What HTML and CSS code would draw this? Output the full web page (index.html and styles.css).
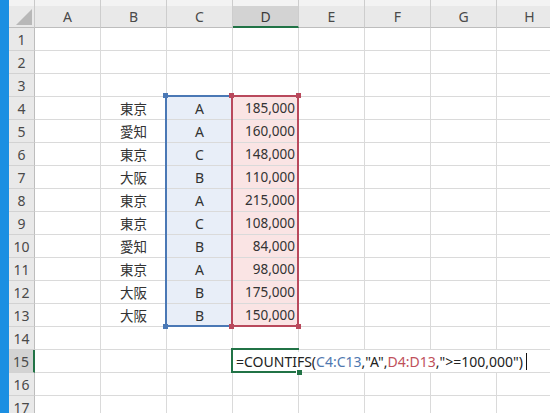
FILE: index.html
```html
<!DOCTYPE html>
<html lang="ja">
<head>
<meta charset="utf-8">
<link rel="stylesheet" href="styles.css">
</head>
<body>
<div class="sheet">
  <div class="strip"></div>
  <div class="grid">
    <div class="corner"><svg width="16" height="16" viewBox="0 0 16 16"><polygon points="16,0 16,16 0,16" fill="#b8b8b8"/></svg></div>
    <div class="ch">A</div><div class="ch">B</div><div class="ch">C</div><div class="ch sel">D</div><div class="ch">E</div><div class="ch">F</div><div class="ch">G</div><div class="ch">H</div>

    <div class="rh">1</div><div class="c"></div><div class="c"></div><div class="c"></div><div class="c"></div><div class="c"></div><div class="c"></div><div class="c"></div><div class="c"></div>
    <div class="rh">2</div><div class="c"></div><div class="c"></div><div class="c"></div><div class="c"></div><div class="c"></div><div class="c"></div><div class="c"></div><div class="c"></div>
    <div class="rh">3</div><div class="c"></div><div class="c"></div><div class="c"></div><div class="c"></div><div class="c"></div><div class="c"></div><div class="c"></div><div class="c"></div>

    <div class="rh">4</div><div class="c"></div><div class="c ctr">東京</div><div class="c ctr blue">A</div><div class="c num red">185,000</div><div class="c"></div><div class="c"></div><div class="c"></div><div class="c"></div>
    <div class="rh">5</div><div class="c"></div><div class="c ctr">愛知</div><div class="c ctr blue">A</div><div class="c num red">160,000</div><div class="c"></div><div class="c"></div><div class="c"></div><div class="c"></div>
    <div class="rh">6</div><div class="c"></div><div class="c ctr">東京</div><div class="c ctr blue">C</div><div class="c num red">148,000</div><div class="c"></div><div class="c"></div><div class="c"></div><div class="c"></div>
    <div class="rh">7</div><div class="c"></div><div class="c ctr">大阪</div><div class="c ctr blue">B</div><div class="c num red">110,000</div><div class="c"></div><div class="c"></div><div class="c"></div><div class="c"></div>
    <div class="rh">8</div><div class="c"></div><div class="c ctr">東京</div><div class="c ctr blue">A</div><div class="c num red">215,000</div><div class="c"></div><div class="c"></div><div class="c"></div><div class="c"></div>
    <div class="rh">9</div><div class="c"></div><div class="c ctr">東京</div><div class="c ctr blue">C</div><div class="c num red">108,000</div><div class="c"></div><div class="c"></div><div class="c"></div><div class="c"></div>
    <div class="rh">10</div><div class="c"></div><div class="c ctr">愛知</div><div class="c ctr blue">B</div><div class="c num red">84,000</div><div class="c"></div><div class="c"></div><div class="c"></div><div class="c"></div>
    <div class="rh">11</div><div class="c"></div><div class="c ctr">東京</div><div class="c ctr blue">A</div><div class="c num red">98,000</div><div class="c"></div><div class="c"></div><div class="c"></div><div class="c"></div>
    <div class="rh">12</div><div class="c"></div><div class="c ctr">大阪</div><div class="c ctr blue">B</div><div class="c num red">175,000</div><div class="c"></div><div class="c"></div><div class="c"></div><div class="c"></div>
    <div class="rh">13</div><div class="c"></div><div class="c ctr">大阪</div><div class="c ctr blue">B</div><div class="c num red">150,000</div><div class="c"></div><div class="c"></div><div class="c"></div><div class="c"></div>
    <div class="rh">14</div><div class="c"></div><div class="c"></div><div class="c"></div><div class="c"></div><div class="c"></div><div class="c"></div><div class="c"></div><div class="c"></div>
    <div class="rh sel">15</div><div class="c"></div><div class="c"></div><div class="c"></div><div class="c edit"><span class="ftext">=COUNTIFS(<span class="rb">C4:C13</span>,"A",<span class="rr">D4:D13</span>,"&gt;=100,000")<span class="caret"></span></span></div><div class="c nob"></div><div class="c nob"></div><div class="c nob"></div><div class="c nob"></div>
    <div class="rh">16</div><div class="c"></div><div class="c"></div><div class="c"></div><div class="c"></div><div class="c"></div><div class="c"></div><div class="c"></div><div class="c"></div>
    <div class="rh">17</div><div class="c"></div><div class="c"></div><div class="c"></div><div class="c"></div><div class="c"></div><div class="c"></div><div class="c"></div><div class="c"></div>

    <div class="range range-blue"><span class="h tl"></span><span class="h bl"></span></div>
    <div class="range range-red"><span class="h tl"></span><span class="h tr"></span><span class="h bl"></span><span class="h br"></span></div>
    <div class="active"><span class="fill"></span></div>
  </div>
</div>
</body>
</html>
```
FILE: styles.css
```css
html, body {
  margin: 0;
  padding: 0;
  background: #ffffff;
  overflow: hidden;
}
body {
  width: 550px;
  height: 413px;
  font-family: "Noto Sans CJK JP", "Noto Sans", sans-serif;
  font-size: 13.5px;
  color: #333;
}
.sheet {
  display: flex;
  width: 550px;
  height: 413px;
  overflow: hidden;
}
.strip {
  flex: 0 0 9px;
  background: #1b8fe2;
}
.grid {
  position: relative;
  display: grid;
  grid-template-columns: 26px repeat(8, 66px);
  grid-template-rows: 28px repeat(17, 23px);
  flex: 0 0 auto;
}
.corner {
  background: linear-gradient(#f3f3f3 0 6px, #e9e9e9 6px);
  border-right: 1px solid #c9c9c9;
  border-bottom: 1px solid #bdbdbd;
  box-sizing: border-box;
  display: flex;
  align-items: flex-end;
  justify-content: flex-end;
  padding: 0 2px 2px 0;
}
.ch {
  background: linear-gradient(#f3f3f3 0 6px, #e9e9e9 6px);
  border-right: 1px solid #cdcdcd;
  border-bottom: 1px solid #bdbdbd;
  box-sizing: border-box;
  display: flex;
  align-items: center;
  justify-content: center;
  padding-top: 6px;
  font-family: "Noto Sans", sans-serif;
  font-size: 14px;
  color: #4a4a4a;
}
.ch.sel {
  background: linear-gradient(#f3f3f3 0 6px, #d3d3d3 6px);
  border-bottom: 2px solid #217346;
  color: #3a3a3a;
}
.rh {
  background: #e9e9e9;
  border-right: 1px solid #bdbdbd;
  border-bottom: 1px solid #d2d2d2;
  box-sizing: border-box;
  display: flex;
  align-items: center;
  justify-content: center;
  font-family: "Noto Sans", sans-serif;
  font-size: 14px;
  color: #4a4a4a;
}
.rh.sel {
  background: #d3d3d3;
  border-right: 2px solid #217346;
}
.c {
  border-right: 1px solid #dadada;
  border-bottom: 1px solid #dadada;
  box-sizing: border-box;
  display: flex;
  align-items: center;
  padding: 0 3px;
  white-space: nowrap;
  font-family: "Noto Sans", "Noto Sans CJK JP", sans-serif;
}
.c.ctr { justify-content: center; font-family: "Noto Sans CJK JP", sans-serif; }
.c.num { justify-content: flex-end; }
.c.blue { background: #e8eef8; font-family: "Noto Sans", sans-serif; font-size: 14px; }
.c.red { background: #fae4e4; }
.c.nob { border-right: none; }
.c.edit {
  overflow: visible;
  position: relative;
  z-index: 2;
}
.ftext {
  display: flex;
  align-items: center;
  font-family: "Noto Sans", sans-serif;
  font-size: 14px;
  color: #222;
  background: #fff;
}
.rb { color: #4f78b0; }
.rr { color: #c0505a; }
.caret {
  display: inline-block;
  width: 1px;
  height: 17px;
  margin-left: 3px;
  background: #111;
}
.range {
  position: absolute;
  top: 95px;
  width: 68px;
  height: 232px;
  box-sizing: border-box;
  border: 2px solid;
  pointer-events: none;
  z-index: 3;
}
.range-blue { left: 156px; border-color: #4a78b5; }
.range-red { left: 222px; border-color: #b9495c; }
.h {
  position: absolute;
  width: 5px;
  height: 5px;
}
.range-blue .h { background: #4a78b5; }
.range-red .h { background: #b9495c; }
.h.tl { left: -4px; top: -4px; }
.h.tr { right: -4px; top: -4px; }
.h.bl { left: -4px; bottom: -4px; }
.h.br { right: -4px; bottom: -4px; }
.active {
  position: absolute;
  left: 222px;
  top: 348px;
  width: 68px;
  height: 25px;
  box-sizing: border-box;
  border: 2px solid #217346;
  border-right: none;
  z-index: 4;
  pointer-events: none;
}
.fill {
  position: absolute;
  right: -3px;
  bottom: -4px;
  width: 5px;
  height: 5px;
  background: #217346;
  border: 1px solid #fff;
  border-bottom: none;
  border-right: none;
}
```
